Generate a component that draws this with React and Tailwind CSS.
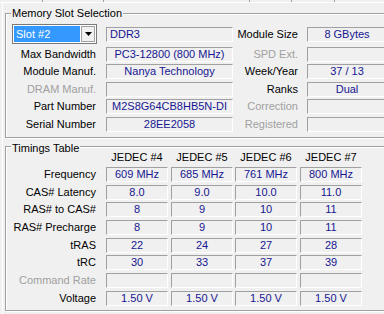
import React from 'react';

const Field = ({ value, w = "w-[62px]", left = false }) => (
  <div className={`${w} h-[15px] shrink-0 flex items-center border border-t-[#a0a0a0] border-l-[#a0a0a0] border-r-white border-b-white text-[#161690] leading-none whitespace-nowrap overflow-hidden ${left ? "justify-start pl-[3px]" : "justify-center"}`}>
    {value}
  </div>
);

const Label = ({ text, dim, w = "w-[90px]" }) => (
  <span className={`${w} shrink-0 text-right leading-none whitespace-nowrap ${dim ? "text-[#a0a0a0]" : "text-black"}`}>{text}</span>
);

const Group = ({ title, titleTop, className, children }) => (
  <div className={`relative w-[392px] border border-[#a0a0a0] shadow-[inset_1px_1px_0_#fff,1px_1px_0_#fff] ${className}`}>
    <span className={`absolute left-[5px] ${titleTop} bg-[#f0f0f0] px-[1px] leading-[13px] text-black`}>{title}</span>
    {children}
  </div>
);

const slotRows = [
  ["Max Bandwidth", false, "PC3-12800 (800 MHz)", "SPD Ext.", true, "", "mt-[3px]"],
  ["Module Manuf.", false, "Nanya Technology", "Week/Year", false, "37 / 13", "mt-[2px]"],
  ["DRAM Manuf.", true, "", "Ranks", false, "Dual", "mt-[3px]"],
  ["Part Number", false, "M2S8G64CB8HB5N-DI", "Correction", true, "", "mt-[2px]"],
  ["Serial Number", false, "28EE2058", "Registered", true, "", "mt-[3px]"],
];

const timings = [
  ["Frequency", false, ["609 MHz", "685 MHz", "761 MHz", "800 MHz"], "mt-[2px]"],
  ["CAS# Latency", false, ["8.0", "9.0", "10.0", "11.0"], "mt-[3px]"],
  ["RAS# to CAS#", false, ["8", "9", "10", "11"], "mt-[2px]"],
  ["RAS# Precharge", false, ["8", "9", "10", "11"], "mt-[3px]"],
  ["tRAS", false, ["22", "24", "27", "28"], "mt-[3px]"],
  ["tRC", false, ["30", "33", "37", "39"], "mt-[2px]"],
  ["Command Rate", true, ["", "", "", ""], "mt-[3px]"],
  ["Voltage", false, ["1.50 V", "1.50 V", "1.50 V", "1.50 V"], "mt-[3px]"],
];

const colGap = ["", "ml-[3px]", "ml-[2px]", "ml-[3px]"];

export default function App() {
  return (
    <div className="w-[384px] h-[314px] overflow-hidden bg-[#f0f0f0] font-['Liberation_Sans',Arial,sans-serif] text-[11px]">
      {/* tab strip remnant */}
      <div className="flex h-[3px] border-b border-white">
        <div className="w-[43px] border-r border-[#a0a0a0]" />
        <div className="w-[61px] border-r border-[#a0a0a0]" />
        <div className="w-[146px] border-r border-[#a0a0a0]" />
        <div className="w-[42px] border-r border-[#a0a0a0]" />
        <div className="w-[43px] border-r border-[#a0a0a0]" />
      </div>

      <div className="ml-[2px] pl-[2px] border-l border-white h-[311px] pt-[10px]">
        <Group title="Memory Slot Selection" titleTop="-top-[7px]" className="pt-[10px] pb-[5px]">
          <div className="flex items-center h-[20px]">
            <div className="ml-[6px] w-[85px] h-[20px] shrink-0 flex p-[1px] bg-white border border-[#7a7a7a]">
              <div className="flex-1 flex items-center pl-[2px] bg-[#3399ff] text-white leading-none">Slot #2</div>
              <div className="w-[14px] ml-[1px] flex items-center justify-center bg-[#f0f0f0] border border-[#a0a0a0]">
                <svg width="7" height="4" viewBox="0 0 7 4"><path d="M0 0h7L3.5 4z" fill="#000" /></svg>
              </div>
            </div>
            <div className="ml-[9px]"><Field value="DDR3" w="w-[127px]" left /></div>
            <Label text="Module Size" w="w-[65px]" />
            <div className="ml-[9px]"><Field value="8 GBytes" w="w-[80px]" /></div>
          </div>
          {slotRows.map(([l, ld, v, r, rd, rv, mt]) => (
            <div key={l} className={`flex items-center h-[15px] ${mt}`}>
              <Label text={l} dim={ld} />
              <div className="ml-[10px]"><Field value={v} w="w-[127px]" /></div>
              <Label text={r} dim={rd} w="w-[65px]" />
              <div className="ml-[9px]"><Field value={rv} w="w-[80px]" /></div>
            </div>
          ))}
        </Group>

        <Group title="Timings Table" titleTop="-top-[5px]" className="mt-[8px] pt-[3px] pb-[4px]">
          <div className="flex items-center h-[15px] pl-[100px]">
            {["JEDEC #4", "JEDEC #5", "JEDEC #6", "JEDEC #7"].map((h, i) => (
              <span key={h} className={`w-[62px] text-center leading-none ${colGap[i]}`}>{h}</span>
            ))}
          </div>
          {timings.map(([l, dim, vals, mt]) => (
            <div key={l} className={`flex items-center h-[15px] ${mt}`}>
              <Label text={l} dim={dim} />
              <div className="ml-[10px] flex">
                {vals.map((v, i) => (
                  <div key={i} className={colGap[i]}><Field value={v} /></div>
                ))}
              </div>
            </div>
          ))}
        </Group>
      </div>
    </div>
  );
}
